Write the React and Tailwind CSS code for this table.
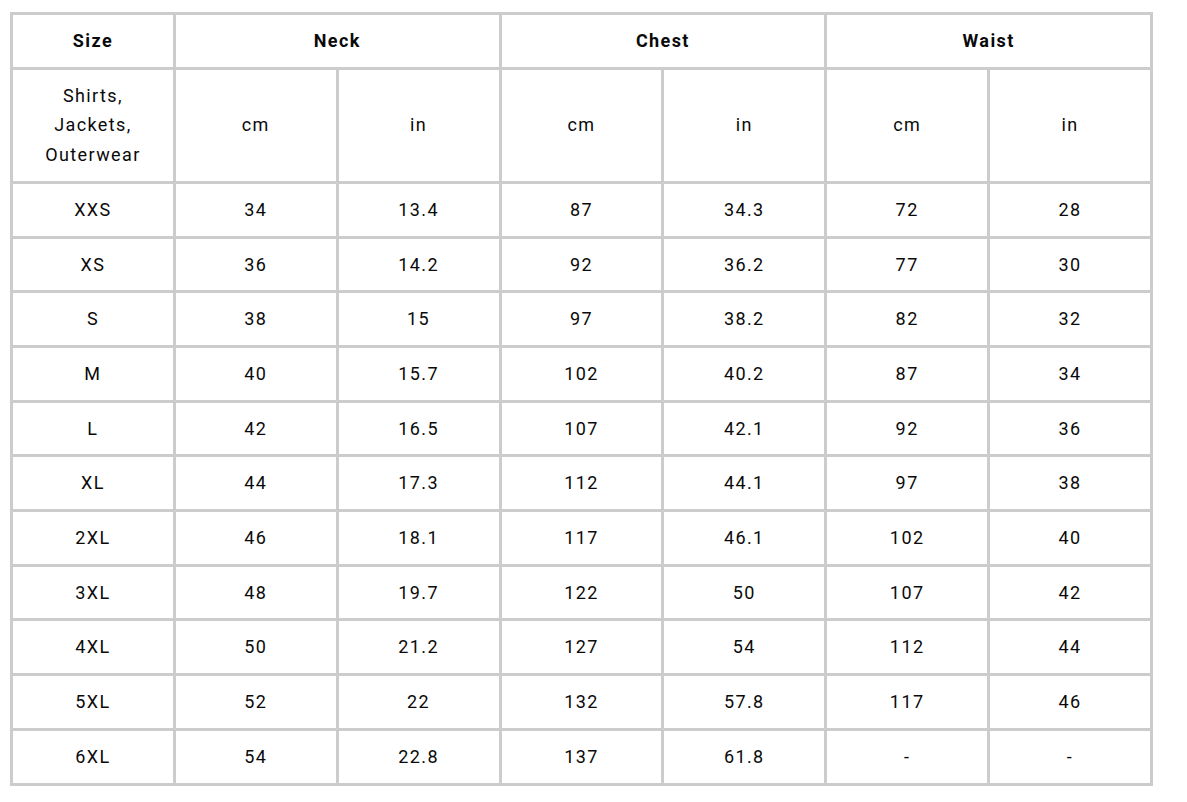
import React from "react";

const rows = [
  ["XXS", "34", "13.4", "87", "34.3", "72", "28"],
  ["XS", "36", "14.2", "92", "36.2", "77", "30"],
  ["S", "38", "15", "97", "38.2", "82", "32"],
  ["M", "40", "15.7", "102", "40.2", "87", "34"],
  ["L", "42", "16.5", "107", "42.1", "92", "36"],
  ["XL", "44", "17.3", "112", "44.1", "97", "38"],
  ["2XL", "46", "18.1", "117", "46.1", "102", "40"],
  ["3XL", "48", "19.7", "122", "50", "107", "42"],
  ["4XL", "50", "21.2", "127", "54", "112", "44"],
  ["5XL", "52", "22", "132", "57.8", "117", "46"],
  ["6XL", "54", "22.8", "137", "61.8", "-", "-"],
];

const cell =
  "border-r-[3px] border-b-[3px] border-[#cccccc] text-center align-middle py-[11px] px-2";

export default function App() {
  return (
    <div
      className="bg-white min-h-[802px] pl-[10px] pt-[12px] text-[#0a0a0a]"
      style={{ fontFamily: "Roboto, 'Noto Sans', sans-serif" }}
    >
      <table className="table-fixed w-[1143px] border-separate border-spacing-0 border-t-[3px] border-l-[3px] border-[#cccccc] text-[18px] leading-[29.7px] tracking-[1.4px]">
        <colgroup>
          {Array.from({ length: 7 }).map((_, i) => (
            <col key={i} />
          ))}
        </colgroup>
        <thead>
          <tr>
            <th className={cell + " font-bold"}>Size</th>
            <th colSpan={2} className={cell + " font-bold"}>Neck</th>
            <th colSpan={2} className={cell + " font-bold"}>Chest</th>
            <th colSpan={2} className={cell + " font-bold"}>Waist</th>
          </tr>
        </thead>
        <tbody>
          <tr>
            <td className={cell}>
              Shirts,
              <br />
              Jackets,
              <br />
              Outerwear
            </td>
            <td className={cell}>cm</td>
            <td className={cell}>in</td>
            <td className={cell}>cm</td>
            <td className={cell}>in</td>
            <td className={cell}>cm</td>
            <td className={cell}>in</td>
          </tr>
          {rows.map((r) => (
            <tr key={r[0]}>
              {r.map((v, i) => (
                <td key={i} className={cell}>
                  {v}
                </td>
              ))}
            </tr>
          ))}
        </tbody>
      </table>
    </div>
  );
}
